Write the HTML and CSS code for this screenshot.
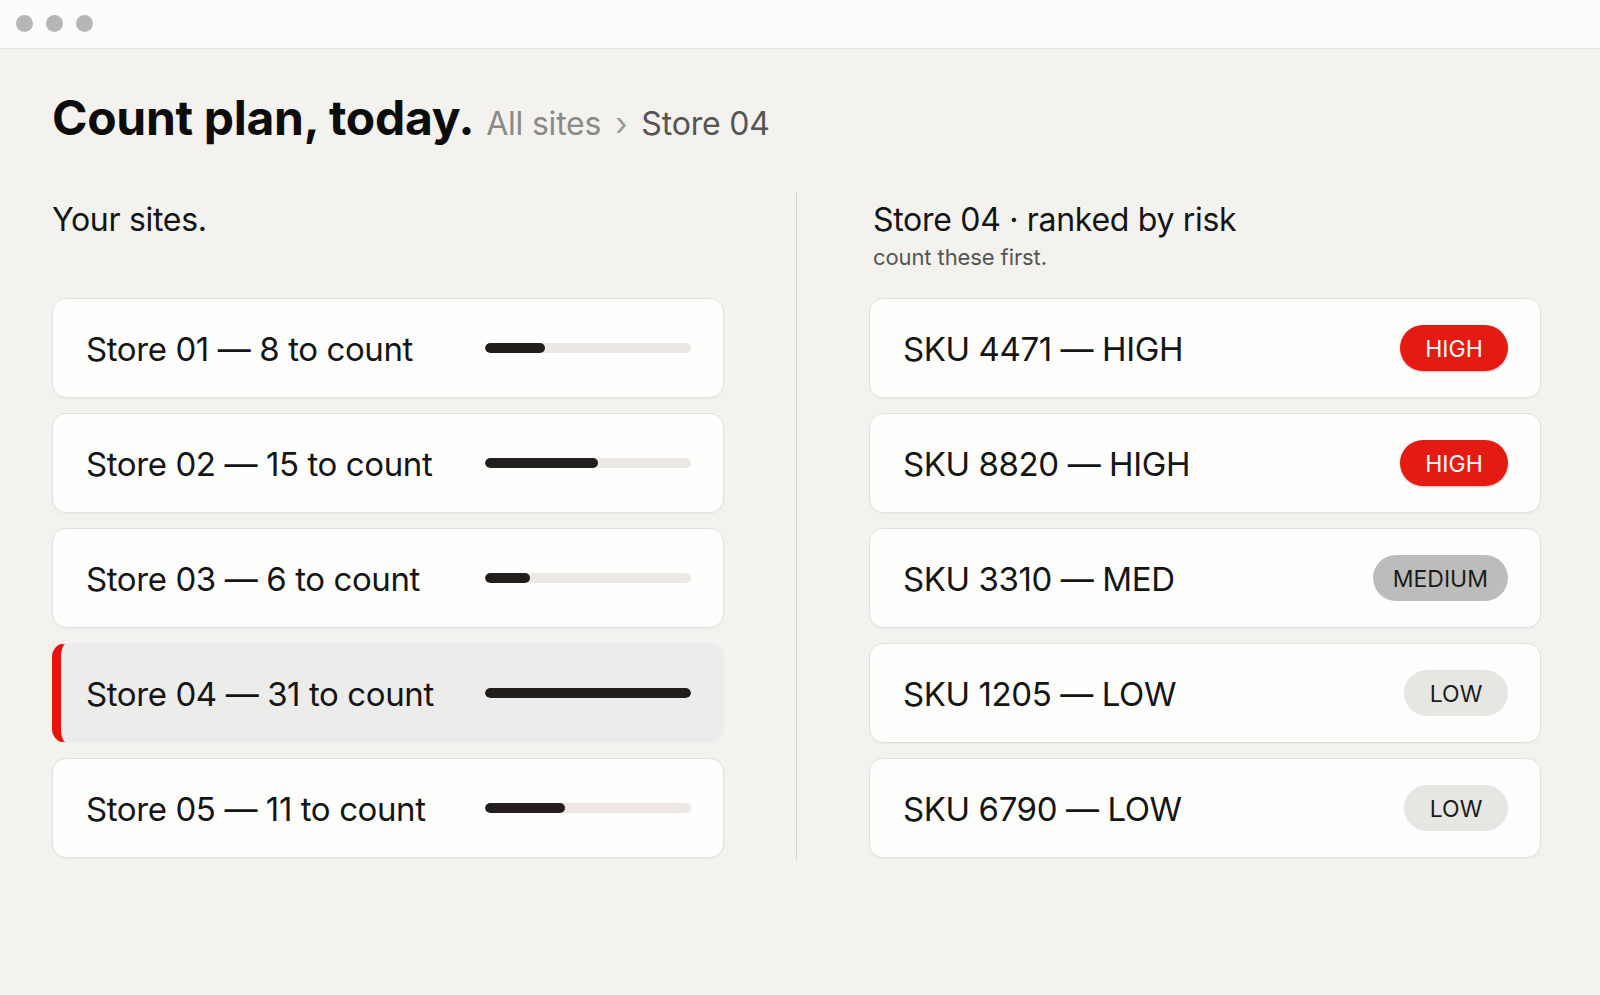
FILE: index.html
```html
<!DOCTYPE html>
<html lang="en">
<head>
    <meta charset="UTF-8">
    <meta name="viewport" content="width=device-width, initial-scale=1.0">
    <title>Count plan, today.</title>
    <link rel="stylesheet" href="styles.css">
</head>
<body>
    <div class="titlebar">
        <span class="dot"></span>
        <span class="dot"></span>
        <span class="dot"></span>
    </div>

    <div class="page">
        <div class="header">
            <h1>Count plan, today.</h1>
            <div class="crumbs">
                <span class="crumb">All sites</span>
                <span class="sep">&rsaquo;</span>
                <span class="crumb current">Store 04</span>
            </div>
        </div>

        <div class="columns">
            <div class="col">
                <div class="col-head">
                    <h2>Your sites.</h2>
                </div>
                <div class="list">
                    <div class="card">
                        <span class="label">Store 01 &mdash; 8 to count</span>
                        <div class="bar"><div class="fill" style="width: 29%"></div></div>
                    </div>
                    <div class="card">
                        <span class="label">Store 02 &mdash; 15 to count</span>
                        <div class="bar"><div class="fill" style="width: 55%"></div></div>
                    </div>
                    <div class="card">
                        <span class="label">Store 03 &mdash; 6 to count</span>
                        <div class="bar"><div class="fill" style="width: 22%"></div></div>
                    </div>
                    <div class="card selected">
                        <span class="label">Store 04 &mdash; 31 to count</span>
                        <div class="bar"><div class="fill" style="width: 100%"></div></div>
                    </div>
                    <div class="card">
                        <span class="label">Store 05 &mdash; 11 to count</span>
                        <div class="bar"><div class="fill" style="width: 39%"></div></div>
                    </div>
                </div>
            </div>

            <div class="divider"></div>

            <div class="col">
                <div class="col-head right">
                    <h2>Store 04 &middot; ranked by risk</h2>
                    <p class="sub">count these first.</p>
                </div>
                <div class="list">
                    <div class="card">
                        <span class="label">SKU 4471 &mdash; HIGH</span>
                        <span class="badge high">HIGH</span>
                    </div>
                    <div class="card">
                        <span class="label">SKU 8820 &mdash; HIGH</span>
                        <span class="badge high">HIGH</span>
                    </div>
                    <div class="card">
                        <span class="label">SKU 3310 &mdash; MED</span>
                        <span class="badge medium">MEDIUM</span>
                    </div>
                    <div class="card">
                        <span class="label">SKU 1205 &mdash; LOW</span>
                        <span class="badge low">LOW</span>
                    </div>
                    <div class="card">
                        <span class="label">SKU 6790 &mdash; LOW</span>
                        <span class="badge low">LOW</span>
                    </div>
                </div>
            </div>
        </div>
    </div>
</body>
</html>
```

FILE: styles.css
```css
body {
    font-family: Inter, "Noto Sans", sans-serif;
    background-color: #f3f2ee;
    color: #151515;
    margin: 0;
}
.titlebar {
    height: 48px;
    background: #fcfcfa;
    border-bottom: 1px solid #e3e2dd;
    display: flex;
    align-items: center;
    gap: 13px;
    padding-left: 16px;
}
.dot {
    width: 17px;
    height: 17px;
    border-radius: 50%;
    background: #b6b6b4;
    margin-top: -2px;
}
.page {
    padding: 40px 59px 0 52px;
}
.header {
    display: flex;
    align-items: baseline;
    gap: 12px;
}
h1 {
    margin: 0;
    font-size: 48px;
    line-height: 58px;
    font-weight: 700;
    letter-spacing: -0.3px;
    color: #0c0c0c;
}
.crumbs {
    display: flex;
    align-items: baseline;
    gap: 14px;
    font-size: 32px;
    letter-spacing: -0.2px;
    color: #8a8a88;
}
.sep {
    color: #999;
}
.crumb.current {
    color: #555;
}
.columns {
    display: grid;
    grid-template-columns: 1fr 1px 1fr;
    column-gap: 72px;
    margin-top: 45px;
}
.divider {
    background: #d6d5d0;
}
.col-head {
    height: 96px;
    padding-top: 10px;
}
.col-head.right {
    padding-left: 4px;
}
h2 {
    margin: 0;
    font-size: 32px;
    line-height: 36px;
    font-weight: 400;
    letter-spacing: -0.3px;
    color: #141414;
}
.sub {
    margin: 6px 0 0;
    font-size: 22px;
    line-height: 26px;
    letter-spacing: -0.1px;
    color: #555;
}
.list {
    display: flex;
    flex-direction: column;
    gap: 15px;
    padding-bottom: 2px;
}
.card {
    height: 100px;
    box-sizing: border-box;
    display: flex;
    align-items: center;
    justify-content: space-between;
    padding: 0 32px 0 33px;
    background: #fefefd;
    border: 1px solid #e2e1dc;
    border-radius: 14px;
    box-shadow: 0px 1px 2px rgba(0, 0, 0, 0.03);
}
.card.selected {
    background: #ececea;
    border-color: #ececea;
    border-left: 9px solid #e8120e;
    padding-left: 25px;
    box-shadow: none;
}
.label {
    font-size: 33px;
    letter-spacing: -0.4px;
    padding-top: 2px;
}
.bar {
    width: 206px;
    height: 10px;
    border-radius: 5px;
    background: #ece8e3;
    overflow: hidden;
}
.fill {
    height: 100%;
    border-radius: 5px;
    background: #221e1c;
}
.badge {
    box-sizing: border-box;
    min-width: 104px;
    height: 46px;
    line-height: 48px;
    padding: 0 20px;
    border-radius: 23px;
    font-size: 23px;
    text-align: center;
    color: #1c1c1c;
}
.badge.high {
    background: #e51a12;
    color: white;
    min-width: 108px;
    box-shadow: 0px 1px 2px rgba(120, 0, 0, 0.3);
}
.badge.medium {
    background: #bcbcba;
}
.badge.low {
    background: #e6e6e3;
}
```
